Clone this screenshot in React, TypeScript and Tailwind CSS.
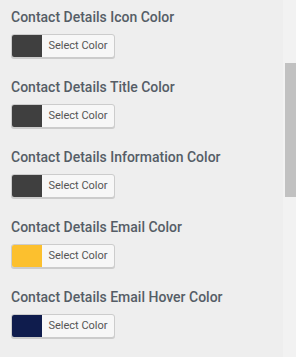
import React from 'react'

const fields = [
  { label: 'Contact Details Icon Color', color: '#3f3f3f' },
  { label: 'Contact Details Title Color', color: '#3f3f3f' },
  { label: 'Contact Details Information Color', color: '#3f3f3f' },
  { label: 'Contact Details Email Color', color: '#fcc02e' },
  { label: 'Contact Details Email Hover Color', color: '#0f1c4d' },
]

function ColorField({ label, color }: { label: string; color: string }) {
  return (
    <div className="mb-[19px]">
      <div className="text-[14px] leading-[20px] font-medium text-[#555d66]">{label}</div>
      <button
        type="button"
        className="mt-[7px] flex h-[24px] w-[104px] items-stretch overflow-hidden rounded-[3px] border border-[#cccccc] bg-[#f7f7f7] shadow-[0_1px_0_#cccccc]"
      >
        <span className="w-[30px]" style={{ backgroundColor: color }} />
        <span className="flex flex-1 items-center justify-center text-[11px] text-[#555555]">
          Select Color
        </span>
      </button>
    </div>
  )
}

export default function App() {
  return (
    <div
      className="flex h-[357px] w-[296px] overflow-hidden bg-[#eeeeee]"
      style={{ fontFamily: 'Roboto, "Noto Sans", sans-serif' }}
    >
      <div className="flex-1 pl-[11px] pt-[7px]">
        {fields.map((f) => (
          <ColorField key={f.label} label={f.label} color={f.color} />
        ))}
      </div>
      <div className="w-[13px] bg-[#f2f2f2] pl-[2px]">
        <div className="mt-[63px] h-[134px] bg-[#c1c1c1]" />
      </div>
    </div>
  )
}
